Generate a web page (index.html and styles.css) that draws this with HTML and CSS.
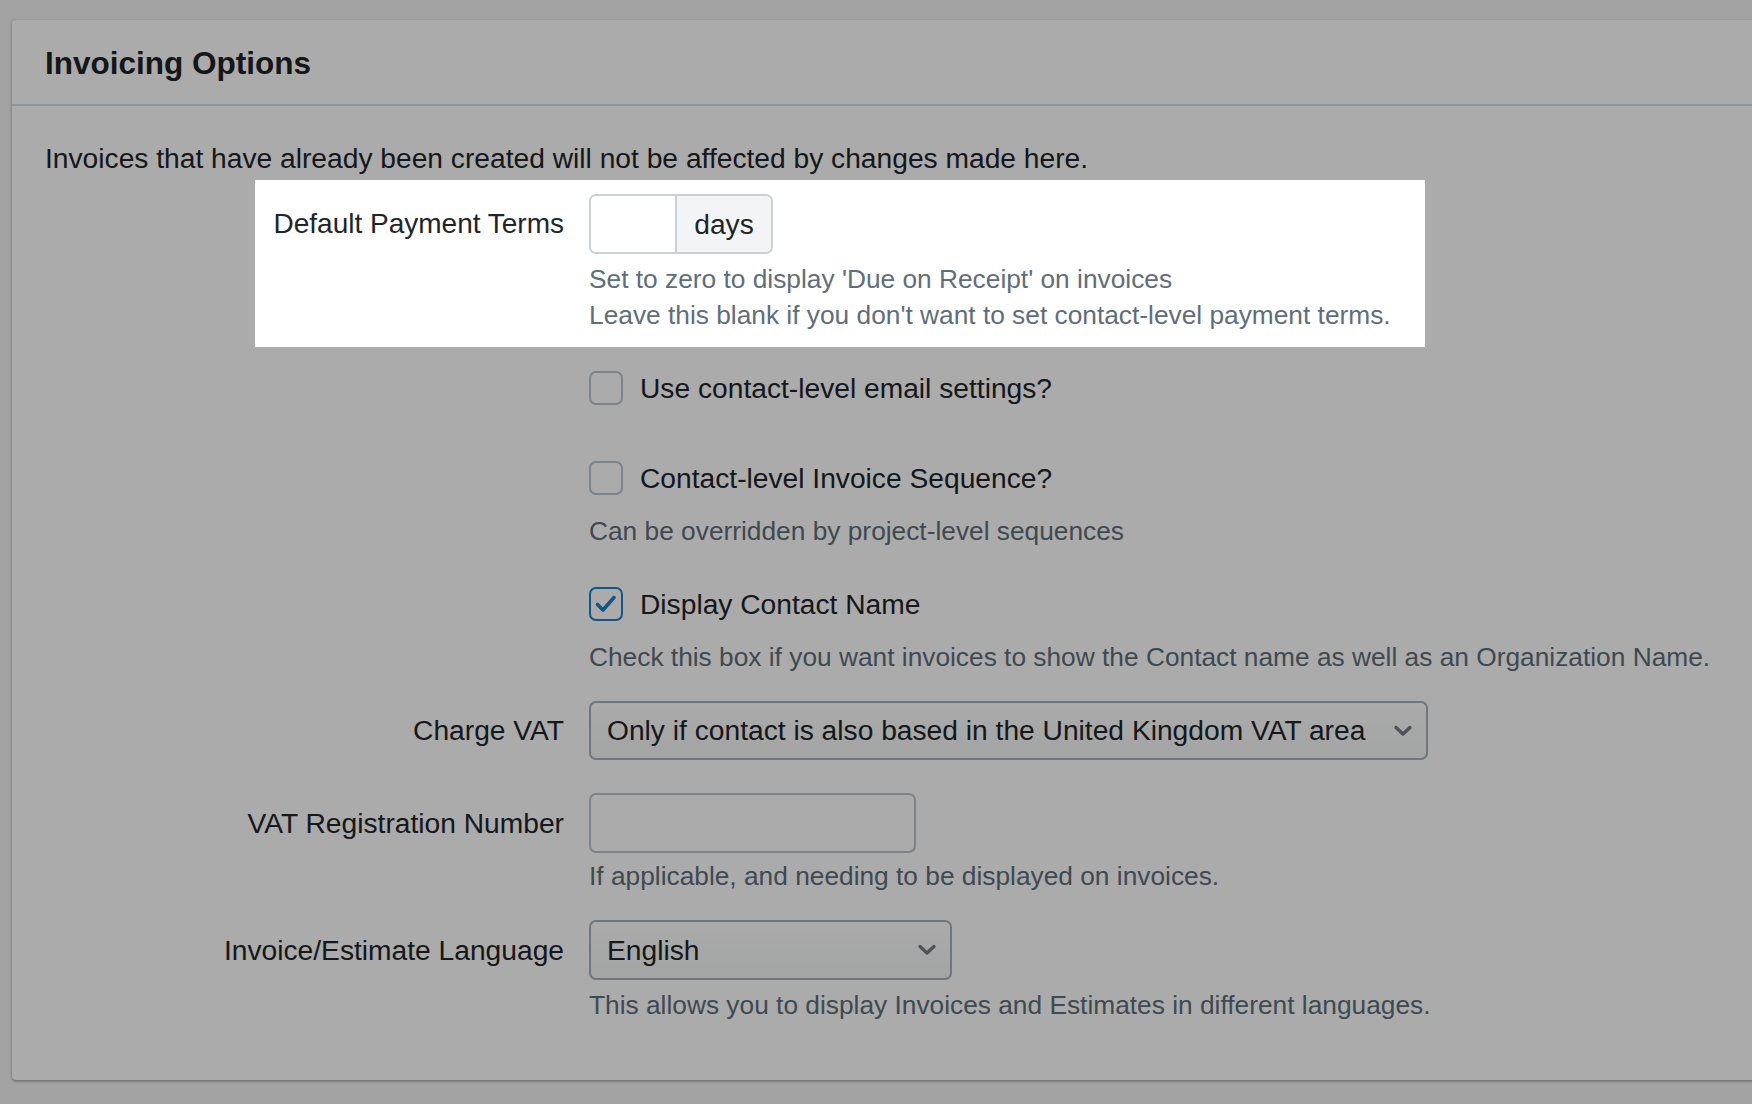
FILE: index.html
```html
<!DOCTYPE html>
<html lang="en">
<head>
<meta charset="utf-8">
<title>Invoicing Options</title>
<link rel="stylesheet" href="styles.css">
</head>
<body>
<div class="card">
  <div class="card-header">
    <h2 class="card-title">Invoicing Options</h2>
  </div>
  <div class="card-body">
    <p class="intro">Invoices that have already been created will not be affected by changes made here.</p>

    <div class="form-row highlight">
      <label class="row-label">Default Payment Terms</label>
      <div class="row-control">
        <div class="input-group">
          <input class="ig-input" type="text">
          <span class="ig-addon">days</span>
        </div>
        <div class="help help-tight">Set to zero to display 'Due on Receipt' on invoices<br>Leave this blank if you don't want to set contact-level payment terms.</div>
      </div>
    </div>

    <div class="form-row row-check1">
      <div class="row-label"></div>
      <div class="row-control">
        <label class="check"><span class="box"></span><span>Use contact-level email settings?</span></label>
      </div>
    </div>

    <div class="form-row row-check2">
      <div class="row-label"></div>
      <div class="row-control">
        <label class="check"><span class="box"></span><span>Contact-level Invoice Sequence?</span></label>
        <div class="help help-check">Can be overridden by project-level sequences</div>
      </div>
    </div>

    <div class="form-row row-check3">
      <div class="row-label"></div>
      <div class="row-control">
        <label class="check"><span class="box checked"><svg viewBox="0 0 34 34" width="34" height="34"><path d="M8.5 17.5 L14 23 L25 10.5" fill="none" stroke="#1f7fc4" stroke-width="3.6" stroke-linecap="round" stroke-linejoin="round"/></svg></span><span>Display Contact Name</span></label>
        <div class="help help-check">Check this box if you want invoices to show the Contact name as well as an Organization Name.</div>
      </div>
    </div>

    <div class="form-row row-vat">
      <label class="row-label">Charge VAT</label>
      <div class="row-control">
        <div class="select select-wide">
          <span>Only if contact is also based in the United Kingdom VAT area</span>
          <svg class="chev" viewBox="0 0 20 14" width="20" height="14"><path d="M3 3.5 L10 10 L17 3.5" fill="none" stroke="#747c84" stroke-width="3.4" stroke-linecap="round" stroke-linejoin="round"/></svg>
        </div>
      </div>
    </div>

    <div class="form-row row-reg">
      <label class="row-label">VAT Registration Number</label>
      <div class="row-control">
        <input class="text-input" type="text">
        <div class="help help-snug">If applicable, and needing to be displayed on invoices.</div>
      </div>
    </div>

    <div class="form-row row-lang">
      <label class="row-label">Invoice/Estimate Language</label>
      <div class="row-control">
        <div class="select select-lang">
          <span>English</span>
          <svg class="chev" viewBox="0 0 20 14" width="20" height="14"><path d="M3 3.5 L10 10 L17 3.5" fill="none" stroke="#747c84" stroke-width="3.4" stroke-linecap="round" stroke-linejoin="round"/></svg>
        </div>
        <div class="help help-tight">This allows you to display Invoices and Estimates in different languages.</div>
      </div>
    </div>
  </div>
</div>
<div class="overlay"></div>
</body>
</html>
```

FILE: styles.css
```css
html, body {
  margin: 0;
  padding: 0;
  overflow: hidden;
  height: 100%;
}
body {
  background: #f3f3f3;
  font-family: "Liberation Sans", Arial, Helvetica, sans-serif;
  color: #212529;
  padding: 20px 0 0 12px;
  box-sizing: border-box;
}
.card {
  background: #ffffff;
  margin-right: -20px;
  border-radius: 4px 0 0 4px;
  box-shadow: -1px 0 3px rgba(0,0,0,0.12), 0 2px 2px rgba(0,0,0,0.22);
  height: 1060px;
  box-sizing: border-box;
}
.card-header {
  height: 86px;
  border-bottom: 2px solid #d6dde3;
  display: flex;
  align-items: center;
  padding-left: 33px;
  padding-top: 2px;
  box-sizing: border-box;
}
.card-title {
  margin: 0;
  font-size: 31.5px;
  font-weight: bold;
  color: #1f2326;
}
.card-body {
  padding: 34px 0 0 33px;
}
.intro {
  margin: 0;
  font-size: 28.2px;
  line-height: 36px;
  color: #212529;
}
.form-row {
  display: grid;
  grid-template-columns: 519px 1fr;
  column-gap: 25px;
  align-items: start;
}
.row-label {
  font-size: 28.2px;
  text-align: right;
  color: #212529;
  line-height: 60px;
}
.row-control {
  display: flex;
  flex-direction: column;
  align-items: flex-start;
}
.highlight {
  position: relative;
  z-index: 20;
  background: #ffffff;
  margin: 4px 0 0 210px;
  width: 1170px;
  grid-template-columns: 309px 1fr;
  padding: 14px 0 14px 0;
}
.highlight .row-label {
  font-size: 28px;
}
.input-group {
  display: flex;
  height: 60px;
  border: 2px solid #c9d0d6;
  border-radius: 7px;
  box-sizing: border-box;
  overflow: hidden;
}
.ig-input {
  width: 84px;
  border: 0;
  border-right: 2px solid #c9d0d6;
  padding: 0;
  margin: 0;
  outline: none;
  background: #fff;
}
.ig-addon {
  width: 94px;
  background: #f3f4f6;
  font-size: 28.2px;
  display: flex;
  align-items: center;
  justify-content: center;
  color: #212529;
}
.help {
  font-size: 26.3px;
  line-height: 36px;
  color: #5f6e7a;
}
.help-tight {
  margin-top: 7px;
}
.help-snug {
  margin-top: 5px;
}
.help-check {
  margin-top: 17px;
}
.check {
  display: flex;
  align-items: center;
  font-size: 28.2px;
  line-height: 36px;
  color: #212529;
}
.box {
  width: 34px;
  height: 34px;
  border: 2px solid #bcc3c9;
  border-radius: 7px;
  box-sizing: border-box;
  margin-right: 17px;
  display: flex;
  align-items: center;
  justify-content: center;
  background: #fff;
  flex: none;
}
.box svg {
  display: block;
  flex: none;
}
.box.checked {
  border-color: #1f7fc4;
}
.row-check1 { margin-top: 23px; }
.row-check2 { margin-top: 54px; }
.row-check3 { margin-top: 37px; }
.row-vat { margin-top: 26px; }
.row-reg { margin-top: 33px; }
.row-lang { margin-top: 26px; }
.row-vat .row-label { line-height: 59px; }
.select {
  display: flex;
  align-items: center;
  justify-content: space-between;
  height: 60px;
  border: 2px solid #a9b1b8;
  border-radius: 7px;
  box-sizing: border-box;
  background: linear-gradient(#ffffff, #f4f5f6);
  padding: 0 13px 0 16px;
  font-size: 28.2px;
  color: #212529;
}
.select-wide { width: 839px; height: 59px; }
.select-lang { width: 363px; }
.chev { display: block; flex: none; }
.text-input {
  width: 327px;
  height: 60px;
  border: 2px solid #bcc3c9;
  border-radius: 7px;
  box-sizing: border-box;
  margin: 0;
  padding: 0 14px;
  background: #fff;
  outline: none;
}
.overlay {
  position: fixed;
  inset: 0;
  background: rgba(0, 0, 0, 0.33);
  z-index: 10;
}
```
